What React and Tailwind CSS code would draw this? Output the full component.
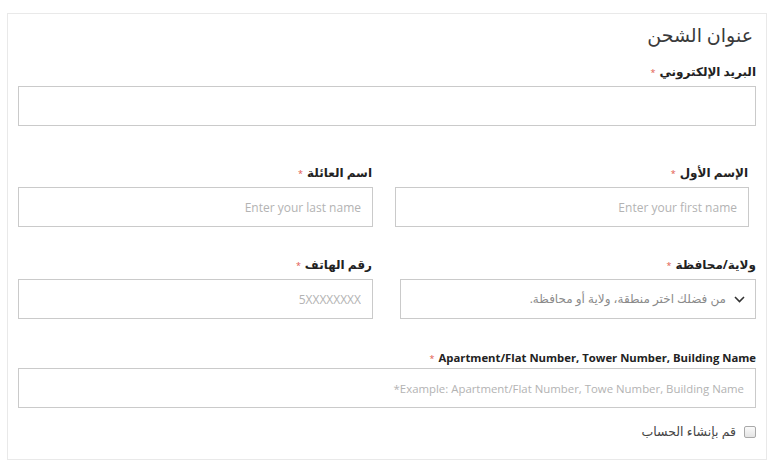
import React from "react";

const font = { fontFamily: '"Open Sans", "DejaVu Sans", sans-serif' };

function Label({ children, className = "" }) {
  return (
    <div className={`flex items-center gap-1 text-[12px] font-bold text-[#222] leading-none ${className}`}>
      <span>{children}</span>
      <span className="text-[#e2574c] text-[9px] font-normal">*</span>
    </div>
  );
}

function TextInput({ placeholder = "", className = "text-[12px]", dir = "rtl" }) {
  return (
    <input
      dir={dir}
      placeholder={placeholder}
      className={`block h-[40px] w-full border border-[#cacaca] bg-white px-[11px] text-[#333] outline-none placeholder:text-[#b3b3b3] ${className}`}
    />
  );
}

export default function App() {
  return (
    <div dir="rtl" className="min-h-[474px] w-[777px] bg-white pt-[13px] pl-[7px] pr-[10px]" style={font}>
      <div className="h-[447px] w-[760px] border border-[#e9e9e9] px-[10px]">
        <h2 className="pt-[11px] text-[19px] font-normal leading-[20px] text-[#3a3a3a] pr-[3px]">عنوان الشحن</h2>

        <Label className="mt-[21px] h-[12px]">البريد الإلكتروني</Label>
        <div className="mt-[8px]">
          <TextInput />
        </div>

        <div className="mt-[41px] flex justify-between">
          <div className="mr-[7px] w-[354px]">
            <Label className="h-[12px] pr-[1px]">الإسم الأول</Label>
            <div className="mt-[8px]">
              <TextInput placeholder="Enter your first name" />
            </div>
          </div>
          <div className="w-[355px]">
            <Label className="h-[12px] pr-[1px]">اسم العائلة</Label>
            <div className="mt-[8px]">
              <TextInput placeholder="Enter your last name" />
            </div>
          </div>
        </div>

        <div className="mt-[32px] flex justify-between">
          <div className="w-[356px]">
            <Label className="h-[12px]">ولاية/محافظة</Label>
            <div className="mt-[8px] flex h-[40px] items-center gap-[8px] border border-[#cacaca] bg-white px-[10px]">
              <svg width="11" height="7" viewBox="0 0 11 7" fill="none">
                <path d="M1 1l4.5 4.5L10 1" stroke="#333" strokeWidth="1.6" />
              </svg>
              <span className="text-[12px] text-[#8a8a8a]">من فضلك اختر منطقة، ولاية أو محافظة.</span>
            </div>
          </div>
          <div className="w-[355px]">
            <Label className="h-[12px] pr-[1px]">رقم الهاتف</Label>
            <div className="mt-[8px]">
              <TextInput placeholder="5XXXXXXXX" />
            </div>
          </div>
        </div>

        <div dir="ltr" className="mt-[33px] flex h-[12px] items-center justify-end gap-1 text-[11.3px] font-bold leading-none text-[#222]">
          <span className="text-[#e2574c] text-[9px] font-normal">*</span>
          <span>Apartment/Flat Number, Tower Number, Building Name</span>
        </div>
        <div className="mt-[4px]">
          <TextInput dir="ltr" className="text-right text-[11.4px]" placeholder="*Example: Apartment/Flat Number, Towe Number, Building Name" />
        </div>

        <label className="mt-[18px] flex items-center gap-[8px] text-[12.5px] text-[#444]">
          <span className="block h-[12px] w-[12px] rounded-[2px] border border-[#a9a9a9] bg-gradient-to-b from-[#fafafa] to-[#e4e4e4]" />
          <span className="leading-none">قم بإنشاء الحساب</span>
        </label>
      </div>
    </div>
  );
}
